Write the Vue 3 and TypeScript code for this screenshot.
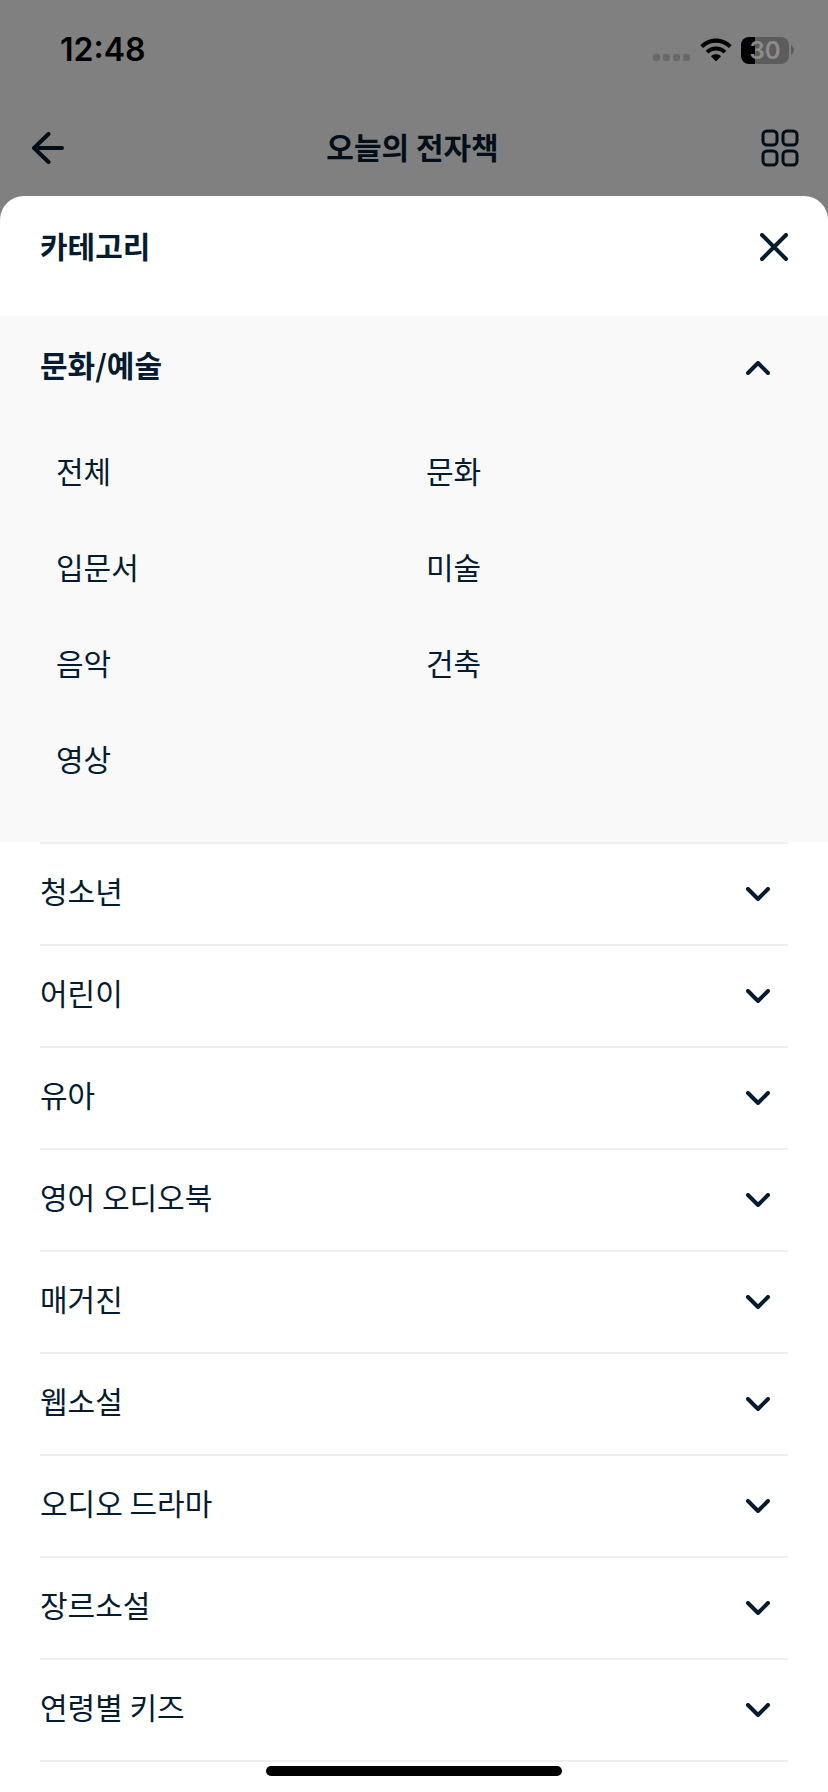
<script setup lang="ts">
import { ref } from 'vue'

interface Category {
  name: string
  children: string[]
}

const categories: Category[] = [
  { name: '문화/예술', children: ['전체', '문화', '입문서', '미술', '음악', '건축', '영상'] },
  { name: '청소년', children: [] },
  { name: '어린이', children: [] },
  { name: '유아', children: [] },
  { name: '영어 오디오북', children: [] },
  { name: '매거진', children: [] },
  { name: '웹소설', children: [] },
  { name: '오디오 드라마', children: [] },
  { name: '장르소설', children: [] },
  { name: '연령별 키즈', children: [] },
]

const opened = ref<string | null>('문화/예술')

function toggle(name: string) {
  opened.value = opened.value === name ? null : name
}
</script>

<template>
  <div class="page">
    <div class="status">
      <span class="time">12:48</span>
      <div class="indicators">
        <svg class="signal" width="38" height="10" viewBox="0 0 38 10" aria-hidden="true">
          <rect v-for="n in 4" :key="n" :x="(n - 1) * 10" y="0" width="7" height="7" rx="2" fill="#686868" />
        </svg>
        <svg class="wifi" width="32" height="24" viewBox="0 0 32 24" aria-hidden="true">
          <path d="M0.3 7.3C9 -1.7 23 -1.7 31.7 7.3L28.9 10.1C21.7 3 10.3 3 3.1 10.1Z" />
          <path d="M5.6 12.7C11.4 7 20.6 7 26.4 12.7L23.6 15.5C19.3 11.5 12.7 11.5 8.4 15.5Z" />
          <path d="M11 18.2C13.9 15.7 18.1 15.7 21 18.2L16.7 22.8Q16 23.4 15.3 22.8Z" />
        </svg>
        <div class="battery">
          <span class="level">30</span>
          <svg width="3" height="10" viewBox="0 0 3 10" aria-hidden="true"><path d="M0 0C4 2 4 8 0 10Z" fill="#5c5c5c" /></svg>
        </div>
      </div>
    </div>

    <header class="appbar">
      <button type="button" class="icon" aria-label="뒤로">
        <svg width="32" height="32" viewBox="0 0 32 32"><path d="M30 16H2M16.500 2L2 16L16.500 30" /></svg>
      </button>
      <h1>오늘의 전자책</h1>
      <button type="button" class="icon" aria-label="메뉴">
        <svg class="grid-icon" width="38" height="38" viewBox="0 0 38 38">
          <rect x="2" y="2" width="14" height="14" rx="4" />
          <rect x="22" y="2" width="14" height="14" rx="4" />
          <rect x="2" y="22" width="14" height="14" rx="4" />
          <rect x="22" y="22" width="14" height="14" rx="4" />
        </svg>
      </button>
    </header>

    <main class="sheet">
      <div class="sheet-head">
        <h2>카테고리</h2>
        <button type="button" class="icon" aria-label="닫기">
          <svg width="28" height="28" viewBox="0 0 28 28"><path d="M2 2L26 26M26 2L2 26" /></svg>
        </button>
      </div>

      <section v-for="cat in categories" :key="cat.name" class="category" :class="{ open: opened === cat.name }">
        <button type="button" class="row" :aria-expanded="opened === cat.name" @click="toggle(cat.name)">
          <span class="label">{{ cat.name }}</span>
          <svg class="chevron" width="24" height="14" viewBox="0 0 24 14" aria-hidden="true"><path d="M2 2L12 12L22 2" /></svg>
        </button>
        <ul v-if="opened === cat.name && cat.children.length" class="children">
          <li v-for="child in cat.children" :key="child"><a href="#">{{ child }}</a></li>
        </ul>
      </section>

      <div class="home"></div>
    </main>
  </div>
</template>

<style>
body {
  margin: 0;
  background: #808080;
}
</style>

<style scoped>
.page {
  display: flex;
  flex-direction: column;
  min-height: 100vh;
  overflow: hidden;
  box-sizing: border-box;
  background: #808080;
  color: #051c30;
  font-family: "Noto Sans CJK KR", sans-serif;
  font-size: 30px;
  line-height: 44px;
}

.status {
  display: flex;
  align-items: center;
  justify-content: space-between;
  height: 100px;
  padding: 0 34px 0 60px;
  box-sizing: border-box;
  color: #000;
}

.time {
  font-family: Inter, sans-serif;
  font-size: 32px;
  font-weight: 600;
}

.indicators {
  display: flex;
  align-items: center;
  gap: 9px;
}

.signal {
  align-self: flex-end;
}

.battery {
  display: flex;
  align-items: center;
  gap: 2px;
}

.level {
  width: 48px;
  height: 27px;
  border-radius: 8px;
  background: linear-gradient(90deg, #000 14px, #5c5c5c 14px);
  color: #8c8c8c;
  font-family: Inter, sans-serif;
  font-size: 24px;
  font-weight: 600;
  line-height: 27px;
  text-align: center;
}

.appbar {
  display: flex;
  align-items: center;
  justify-content: space-between;
  height: 96px;
  padding: 0 29px 0 32px;
  box-sizing: border-box;
  color: #020e18;
}

h1,
h2 {
  margin: 0;
  padding-bottom: 4px;
  font-size: 30px;
  font-weight: 700;
  line-height: 44px;
}

.icon {
  display: flex;
  padding: 0;
  border: 0;
  background: none;
  color: inherit;
}

.icon path,
.icon rect,
.chevron path {
  fill: none;
  stroke: currentColor;
  stroke-width: 4;
  stroke-linecap: round;
  stroke-linejoin: round;
}

.icon .grid-icon,
.grid-icon rect {
  stroke-width: 3;
}

.sheet {
  position: relative;
  flex: 1;
  border-radius: 24px 24px 0 0;
  background: #fff;
}

.sheet-head {
  display: flex;
  align-items: center;
  justify-content: space-between;
  height: 120px;
  padding: 0 40px 18px;
  box-sizing: border-box;
}

.row {
  display: flex;
  align-items: center;
  justify-content: space-between;
  width: 100%;
  height: 100px;
  padding: 0 18px 0 0;
  border: 0;
  background: none;
  color: inherit;
  font: inherit;
  text-align: left;
}

.label {
  padding-bottom: 8px;
}

.category {
  margin: 0 40px;
  border-bottom: 2px solid #eee;
}

.category.open {
  margin: 0;
  padding: 0 40px;
  border-bottom: 0;
  background: #f9f9f9;
}

.category.open .row {
  height: 104px;
  font-weight: 700;
}

.category.open .chevron {
  transform: rotate(180deg);
}

.category.open + .category {
  border-top: 2px solid #eee;
}

.children {
  display: grid;
  grid-template-columns: 1fr 1fr;
  column-gap: 8px;
  margin: 0;
  padding: 2px 0 36px 16px;
  list-style: none;
}

.children li {
  display: flex;
  align-items: center;
  height: 96px;
}

.children a {
  color: inherit;
  text-decoration: none;
}

.home {
  position: absolute;
  bottom: 16px;
  left: 50%;
  width: 296px;
  height: 10px;
  border-radius: 5px;
  background: #000;
  transform: translateX(-50%);
}
</style>
